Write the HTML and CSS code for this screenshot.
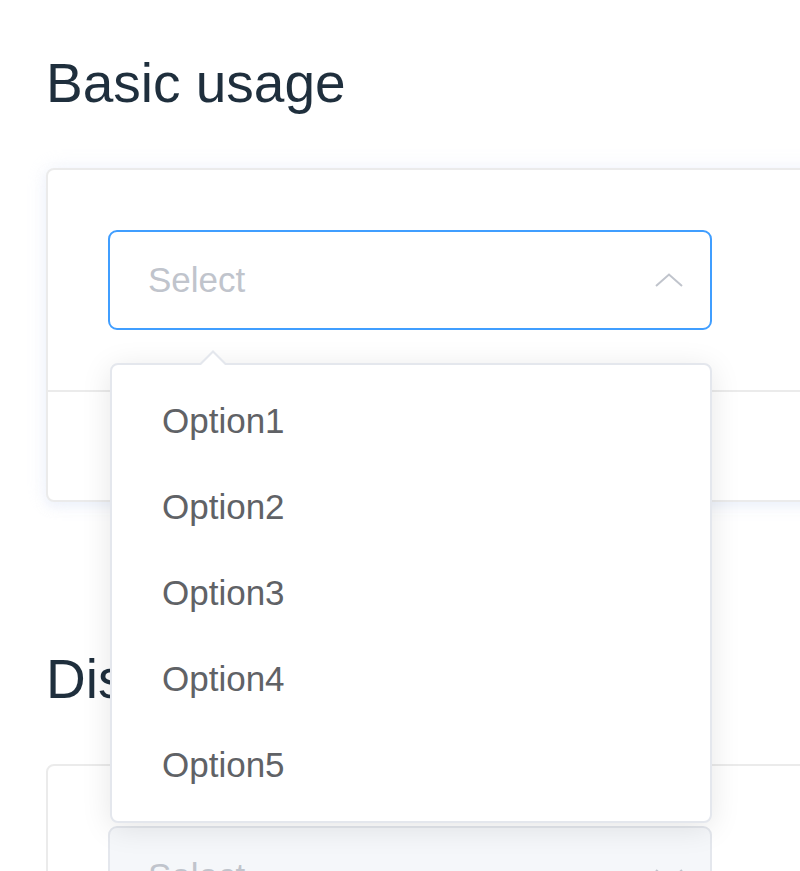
FILE: index.html
```html
<!DOCTYPE html>
<html lang="en">
<head>
    <meta charset="UTF-8">
    <meta name="viewport" content="width=device-width, initial-scale=1.0">
    <title>Select</title>
    <link rel="stylesheet" href="styles.css">
</head>
<body>
    <div class="page">
        <h3 class="section-title">Basic usage</h3>
        <div class="demo-block hovered">
            <div class="demo-source">
                <div class="select">
                    <div class="select-input is-focus">
                        <span class="placeholder">Select</span>
                        <svg class="arrow" width="28" height="14" viewBox="0 0 28 14">
                            <polyline points="1,13 14,1.5 27,13" fill="none" stroke="#c0c4cc" stroke-width="2"/>
                        </svg>
                    </div>
                    <div class="dropdown">
                        <span class="popper-arrow"></span>
                        <ul class="dropdown-list">
                            <li class="dropdown-item">Option1</li>
                            <li class="dropdown-item">Option2</li>
                            <li class="dropdown-item">Option3</li>
                            <li class="dropdown-item">Option4</li>
                            <li class="dropdown-item">Option5</li>
                        </ul>
                    </div>
                </div>
            </div>
            <div class="demo-control"></div>
        </div>

        <h3 class="section-title second">Disabled option</h3>
        <div class="demo-block">
            <div class="demo-source">
                <div class="select">
                    <div class="select-input is-disabled">
                        <span class="placeholder">Select</span>
                        <svg class="arrow" width="28" height="14" viewBox="0 0 28 14">
                            <polyline points="1,1 14,12.5 27,1" fill="none" stroke="#c0c4cc" stroke-width="2"/>
                        </svg>
                    </div>
                </div>
            </div>
            <div class="demo-control"></div>
        </div>
    </div>
</body>
</html>
```

FILE: styles.css
```css
/* General Styles */
body {
    margin: 0;
    padding: 0;
    background: #fff;
    font-family: "Helvetica Neue", "Liberation Sans", Arial, sans-serif;
    overflow: hidden;
}

.page {
    padding-left: 46px;
    width: 1000px;
}

.section-title {
    margin: 52px 0 53px;
    font-size: 55px;
    line-height: 63px;
    font-weight: 400;
    color: #1f2f3d;
}

.section-title.second {
    margin-top: 146px;
}

/* Demo card */
.demo-block {
    border: 2px solid #ebebeb;
    border-radius: 8px;
    background: #fff;
}

.demo-block.hovered {
    box-shadow: 0 0 20px 0 rgba(232, 237, 250, 0.6), 0 5px 10px 0 rgba(232, 237, 250, 0.5);
}

.demo-source {
    padding: 60px;
    border-bottom: 2px solid #ebebeb;
}

.demo-control {
    height: 108px;
}

/* Select */
.select {
    position: relative;
    width: 604px;
}

.select-input {
    box-sizing: border-box;
    height: 100px;
    display: flex;
    align-items: center;
    justify-content: space-between;
    padding: 0 27px 0 38px;
    border: 2px solid #dcdfe6;
    border-radius: 9px;
    background: #fff;
}

.select-input.is-focus {
    border-color: #409eff;
}

.select-input.is-disabled {
    background: #f5f7fa;
    border-color: #e4e7ed;
}

.placeholder {
    font-size: 35px;
    color: #c0c4cc;
}

.arrow {
    display: block;
}

/* Dropdown */
.dropdown {
    position: absolute;
    top: 133px;
    left: 2px;
    z-index: 10;
    box-sizing: border-box;
    width: 602px;
    border: 2px solid #e4e7ed;
    border-radius: 8px;
    background: #fff;
    box-shadow: 0 5px 30px 0 rgba(0, 0, 0, 0.1);
}

.popper-arrow,
.popper-arrow::after {
    position: absolute;
    display: block;
    width: 0;
    height: 0;
    border: 15px solid transparent;
    border-top-width: 0;
}

.popper-arrow {
    top: -15px;
    left: 86px;
    border-bottom-color: #e4e7ed;
}

.popper-arrow::after {
    content: "";
    top: 3px;
    left: -15px;
    border-bottom-color: #fff;
}

.dropdown-list {
    list-style: none;
    margin: 0;
    padding: 13px 0;
}

.dropdown-item {
    height: 86px;
    line-height: 86px;
    padding: 0 50px;
    font-size: 35px;
    color: #606266;
    white-space: nowrap;
}
```
